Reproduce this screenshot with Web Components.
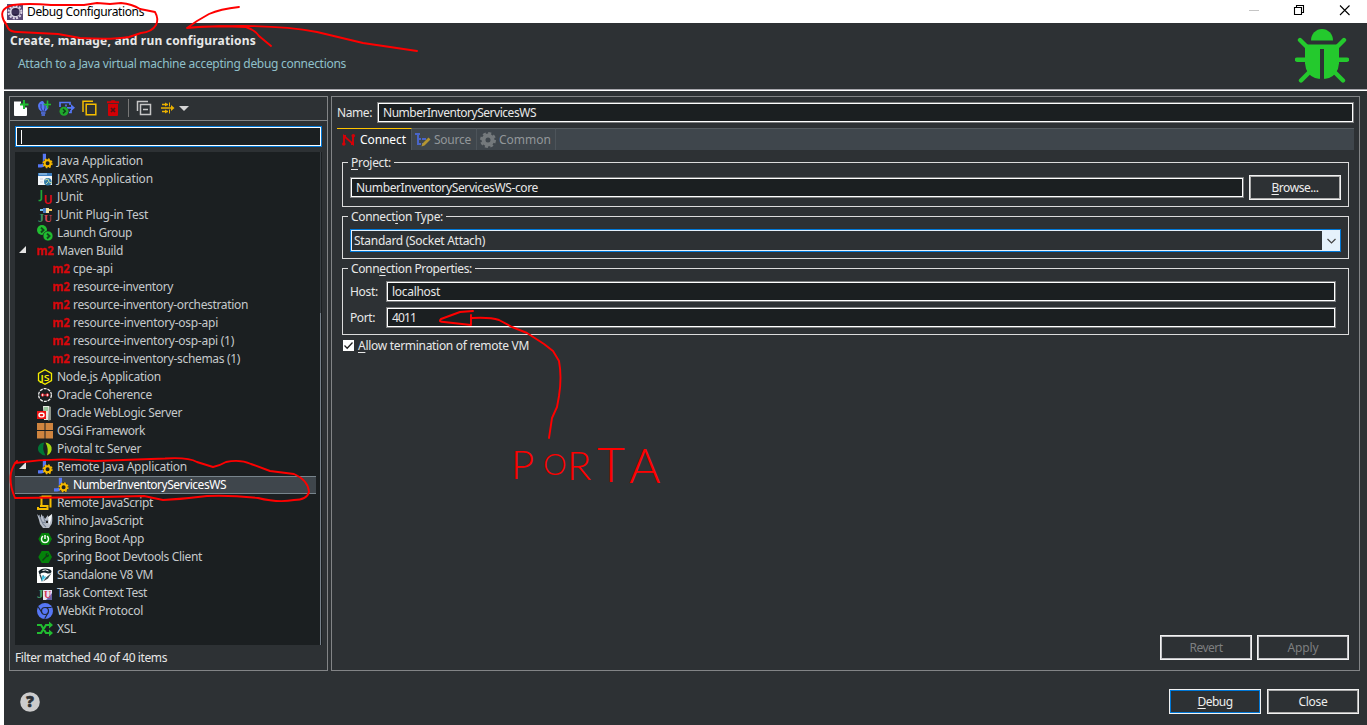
<!DOCTYPE html>
<html lang="en"><head><meta charset="utf-8"><title>Debug Configurations</title>
<style>
html,body{margin:0;height:100%;overflow:hidden}
body{font:12px/18px "Noto Sans","Open Sans",sans-serif;color:#e8e8e8;background:#fff}
</style></head><body>
<debug-dialog></debug-dialog>
<script>
const define=(name,html,setup)=>{
  const t=document.createElement('template');t.innerHTML=html;
  customElements.define(name,class extends HTMLElement{
    static get observedAttributes(){return ['name'];}
    constructor(){super();this.attachShadow({mode:'open'}).append(t.content.cloneNode(true));}
    connectedCallback(){if(setup)setup.call(this,this.shadowRoot);}
    attributeChangedCallback(){if(this.isConnected&&setup)setup.call(this,this.shadowRoot);}
  });
};
const gear=(x,y,r,c,w=2)=>`<circle cx="${x}" cy="${y}" r="${r}" fill="none" stroke="${c}" stroke-width="${w}"/><circle cx="${x}" cy="${y}" r="${r+1.3}" fill="none" stroke="${c}" stroke-width="1.5" stroke-dasharray="${((r+1.3)*Math.PI/8).toFixed(2)}"/>`;
const jApp=`<path d="M7.400 .8v8.4q0 3.6-3.200 3.600H1" fill="none" stroke="#5677f5" stroke-width="3.200"/><circle cx="10.600" cy="10.300" r="4.800" fill="#1b1f21"/>${gear(10.6,10.3,3,'#f5b800',2)}`;
const icons={
 java:jApp,
 jaxrs:`<path d="M1 2h14v12H1z" fill="#f4f7fa"/><path d="M1 2h14v3H1z" fill="#3e7fc0"/><path d="M2 3h8" stroke="#b9dcf5"/><path d="M3 8h3M3 11h3" stroke="#ccd"/><circle cx="10.8" cy="10.7" r="3.8" fill="#347aa8"/><path d="M8 9l3-1 1 3 3 1M9 13l2-2" stroke="#bdd9a2" fill="none"/>`,
 junit:`<text x="2.500" y="10" font-size="12" font-weight="600" fill="#20ae38">J</text><text x="6.500" y="14.8" font-size="12" font-weight="600" fill="#e10b18">U</text>`,
 plug:`<path d="M3 3h4" stroke="#79c8f5" stroke-width="2"/><path d="M6 1h4l2 2-2 3H6z" fill="#477ac2"/><path d="M9 1h3v5H9z" fill="#f4e6aa"/><path d="M12 3h3" stroke="#f4c658" stroke-width="2"/><text x="1" y="15" font-family="Liberation Serif" font-weight="700" font-size="12" fill="#3f9262">J</text><text x="7" y="15" font-family="Liberation Serif" font-weight="700" font-size="11" fill="#d9445b">U</text>`,
 group:`<circle cx="5" cy="5" r="5" fill="#21bd31"/><circle cx="11" cy="11" r="5" fill="#21bd31" stroke="#1b1f21" stroke-width=".7"/><path d="M4 2.6L6.5 5 4 7.5M10 8.6l2.5 2.4-2.5 2.5" fill="none" stroke="#10491a" stroke-width="2"/>`,
 maven:`<text x="-.8" y="12" font-size="13" font-weight="700" textLength="17.500" lengthAdjust="spacingAndGlyphs" fill="#d8070b" stroke="#d8070b" stroke-width=".3">m2</text>`,
 node:`<path d="M8 .8l6.5 3.7v7L8 15.2l-6.5-3.7v-7z" fill="none" stroke="#f4ee00" stroke-width="1.3"/><text x="3.4" y="11.7" font-size="9" font-weight="600" textLength="9" lengthAdjust="spacingAndGlyphs" fill="#f4ee00">JS</text>`,
 coherence:`<circle cx="8" cy="8" r="6.4" fill="none" stroke="#eee" stroke-width="1.3" stroke-dasharray="3 1"/><path d="M4 8h8" stroke="#e72d36"/><circle cx="5.600" cy="8" r="1.300" fill="#fff" stroke="#e72d36"/><circle cx="10.400" cy="8" r="1.300" fill="#fff" stroke="#e72d36"/>`,
 weblogic:`<path d="M6 1h6v14H7z" fill="#e6e8e2"/><path d="M12 1l2 1v13l-3 .7" fill="#8d9389"/><path d="M7 3h4M7 5h4" stroke="#4ba254"/><path d="M0 6h9v8H0z" fill="#ee1313"/><rect x="2" y="8.3" width="5" height="3.6" rx="1.8" fill="none" stroke="#fff" stroke-width="1.4"/>`,
 osgi:`<path d="M0 0h7.500v7H0zM8.500 0H16v7H8.500zM0 8h7.500v7.500H0zM8.500 8H16v7.500H8.500z" fill="#cf843f"/>`,
 pivotal:`<path d="M7.2 1.4C1 2-.5 8 2.500 11.500q2 2.600 6 3Q4.5 7 7.2 1.4z" fill="#007534"/><path d="M8.5 1.5Q13 2 14.5 6q1 6-4.5 8.5Q12 8 8.5 1.5z" fill="#a8d812"/>`,
 rjs:`<path d="M4.5 1.5h9v11M4.5 1.5v9M1 12v2h9.5v-3H3M2.5 2.5H5" fill="none" stroke="#f4bd00" stroke-width="2"/>`,
 rhino:`<path d="M0 1l4 4V1l4 5 3-4v4l4-5q1 9-1 11l-2 3H6l-3-4-1-4z" fill="#b7bec9"/><path d="M2 2l4 9 3 3M6 3l2 5 4-1M5 9l4 1" fill="none" stroke="#7c8798" stroke-width="1.100"/><path d="M9 8h2v2H9z" fill="#222"/><path d="M11 4l4-3-1 6-2 5z" fill="#f2f5f7"/>`,
 boot:`<path d="M4.7 2h7L15 8l-3.4 6H4.7L1.3 8z" fill="#04820a"/><path d="M6 5.2a3.5 3.5 0 1 0 4 0M8 4v4" fill="none" stroke="#f5fff5" stroke-width="1.5"/>`,
 dev:`<path d="M4.7 2h7L15 8l-3.4 6H4.7L1.3 8z" fill="#04820a"/><path d="M5 11l3.8-4q-1-3 2.3-3L9.8 5.3l1 1L12 5q.4 3.2-2.5 3.2L6 12z" fill="#103d17"/>`,
 v8:`<path d="M0 0h16v16H0z" fill="#fff"/><path d="M1.500 4.500Q4 1 9 1.500q6 .5 5.500 3.500-1 2-4 1.500Q6 4 2.500 7.500z" fill="#142129"/><path d="M5.500 3.500q3-1.500 6 .5" stroke="#fff" fill="none"/><path d="M14.500 6l-3.500 5.500-5 3 3-4z" fill="#36454b"/><path d="M3 7.500l2 5.500 1.500-4.500" stroke="#36454b" stroke-width="1.300" fill="none"/><path d="M6 8.500l-.5 4 3-3" stroke="#3dc5e9" stroke-width="1.500" fill="none"/>`,
 task:`<path d="M6 5h9v10H6z" fill="#e4e4f3"/><path d="M15 8v7H9" fill="#6764a8"/><text x="0" y="12.5" font-family="Liberation Serif" font-weight="700" font-size="13" fill="#48a16c">J</text><text x="7" y="12.5" font-family="Liberation Serif" font-weight="700" font-size="10" fill="#d53b52">U</text>`,
 webkit:`<circle cx="8" cy="8" r="8" fill="#5677f5"/><circle cx="8" cy="8" r="3.5" fill="#5677f5" stroke="#202838" stroke-width="1.2"/><path d="M8 4.5h6.6M11 9.8l-3.3 6M5 9.8L1.3 4" stroke="#202838" stroke-width="1.2"/>`,
 xsl:`<path d="M0 4h4l5 8h4M0 12h4l5-8h4" fill="none" stroke="#22bd31" stroke-width="2.200"/><path d="M12 .5L16 4l-4 3.5zM12 8.5l4 3.5-4 3.5z" fill="#22bd31"/>`,
 neu:`<path d="M1 1.500h7v6h6V15q0 1-1 1H2q-1 0-1-1z" fill="#fff"/><path d="M8 4.500h3v4H8z" fill="#fff"/><path d="M11 0v9M7 4.500h8.500" stroke="#20bb30" stroke-width="2"/>`,
 proto:`<path d="M7 1a5 5 0 0 0-5 5q0 3 3 5.500h4.500Q13 8.500 12 6L9.500 5z" fill="#5677f5"/><path d="M5 13h4.500M5.500 15h3.500" stroke="#5677f5" stroke-width="1.500"/><path d="M5 4v4l1.500 3M9 5v3l-1 3" fill="none" stroke="#2f3f82"/><path d="M11.500 .5v8M7.500 4.500H15" stroke="#20bb30" stroke-width="1.600"/>`,
 exp:`<path d="M1 7V2.5h10V5M10 12.500h2v-2.500M8 7.800h6M7 4.500v2" fill="none" stroke="#5677f5" stroke-width="1.700"/><path d="M12 4.3l4 3.5-4 3.5z" fill="#5677f5"/><circle cx="5" cy="11.2" r="4.5" fill="#20a82d"/><path d="M4 9l2.3 2.2L4 13.4" fill="none" stroke="#103c19" stroke-width="1.5"/>`,
 dup:`<path d="M1 12V1.2h10M4.2 4.2h9.6v10.6H4.2z" fill="none" stroke="#f4bd00" stroke-width="1.5"/>`,
 del:`<path d="M2 1.200h3.500l1-1h3l1 1H14v2H2zM3 4h10v11q0 1-1 1H4q-1 0-1-1z" fill="#d20005"/><path d="M6 8l4 4m0-4l-4 4" stroke="#4b1518" stroke-width="1.700"/>`,
 collapse:`<path d="M1.5 11V1.5H12M4.5 4.5h10v10h-10zM7 9.5h5" fill="none" stroke="#c6c6c6" stroke-width="1.5"/>`,
 filter:`<path d="M2 4.500h6M1 8h12M2 11.500h6" fill="none" stroke="#eab100" stroke-width="1.300"/><path d="M5 2.500l3 2-3 2zM5 9.500l3 2-3 2zM11 5l3.500 3-3.500 3z" fill="#eab100"/><path d="M9.500 2.500v4M9.500 9.500v4" stroke="#eab100"/>`,
 connect:`<path d="M3 12V4l9 8V4M2 4h3M10 12h3" fill="none" stroke="#d50007" stroke-width="1.900"/><circle cx="2.800" cy="12" r="1.800" fill="#d50007"/><circle cx="12.300" cy="3.800" r="1.800" fill="#d50007"/>`,
 source:`<path d="M0 2h5M3 2v10h3M3 7h3M7 7h4M7 12h3" fill="none" stroke="#4965c9" stroke-width="2"/><path d="M6.5 14.5l1-3 6-6 2 2-6 6z" fill="#b49531"/>`,
 gear:`<circle cx="8" cy="8" r="4.5" fill="none" stroke="#74797c" stroke-width="4"/><circle cx="8" cy="8" r="6.8" fill="none" stroke="#74797c" stroke-width="2.4" stroke-dasharray="3 2.34"/>`,
 eclipse:`<path d="M0 0h16v16H0z" fill="#5a4a76"/><circle cx="8" cy="8" r="6.4" fill="none" stroke="#ddd6e8" stroke-width="2" stroke-dasharray="2 1.35"/><circle cx="8" cy="8" r="5.4" fill="#d9d5e3"/><circle cx="8.5" cy="8" r="4" fill="#2b2145"/><path d="M5 7h7M5 9h7" stroke="#5d4f78" stroke-width=".7"/>`
};
define('x-icon','<style>:host{display:block;width:16px;height:16px;flex:none}svg{display:block;overflow:visible}</style><svg width="16" height="16" viewBox="0 0 16 16"></svg>',function(r){r.querySelector('svg').innerHTML=icons[this.getAttribute('name')]||'';});

define('window-bar',`<style>:host{display:flex;height:23px;align-items:center;background:#fff;color:#000;padding-left:7px;box-sizing:border-box}
fit-text{margin:1px 0 0 4px}.c{margin-left:auto}svg{display:block}</style>
<x-icon name="eclipse"></x-icon><fit-text w="117">Debug Configurations</fit-text>
<svg class="c" width="130" height="23" fill="none"><path d="M12 10.5h10" stroke="#c5c5c5"/><path d="M57.5 7.5h7v7h-7zM59.5 7V5.500h7v7H65" stroke="#000" stroke-width="1.1"/><path d="M103 5.500l9.500 9.500m0-9.500l-9.500 9.500" stroke="#000" stroke-width="1.1"/></svg>`);
define('dialog-header',`<style>:host{display:flex;justify-content:space-between;height:66px;border-bottom:1px solid #a5a5ab;box-shadow:0 1px #fff;margin-bottom:1px;padding:0 18px 0 6px}
.t{padding-top:9px}.t fit-text{display:block}b{font-weight:700}.s{margin:5px 0 0 8px;color:#8fc0ca}svg{margin-top:5px}</style>
<div class="t"><fit-text w="246"><b>Create, manage, and run configurations</b></fit-text><fit-text class="s" w="328">Attach to a Java virtual machine accepting debug connections</fit-text></div>
<svg width="54" height="57" viewBox="1295 28 54 57"><g fill="#24c92d"><path d="M1311 40.500a11 11.500 0 0 1 22 0z"/><path d="M1305 44.500h34v19q-1 11-10 14.500-7 2-14 0-9-3.500-10-14.500z"/></g><path d="M1322 49v30" stroke="#2d3134" stroke-width="4"/><path d="M1300 40l7 7M1344 40l-7 7M1297 59.700h9M1347 59.700h-9M1301 80.500l8-8M1343 80.500l-8-8" stroke="#24c92d" stroke-width="4.400" stroke-linecap="round"/></svg>`);
define('tool-bar',`<style>:host{display:flex;height:22px;padding-bottom:1px;align-items:center;border-bottom:1px solid #828486;padding-left:3px;gap:7px}i{width:1px;height:18px;background:#777;margin:0}.f{margin-left:1px}.a{border:5px solid transparent;border-top-color:#d5d5d5;border-bottom:0;margin-left:-4px}</style>
<x-icon name="neu"></x-icon><x-icon name="proto"></x-icon><x-icon name="exp"></x-icon><x-icon name="dup"></x-icon><x-icon name="del"></x-icon><i></i><x-icon name="collapse"></x-icon><x-icon class="f" name="filter"></x-icon><div class="a"></div>`);
define('tree-row',`<style>:host{display:flex;align-items:center;height:18px;color:#c5c9cb;box-sizing:border-box;padding-left:22px}:host([sub]){padding-left:38px}
:host([sel]){background:#3f464c;color:#fff;box-shadow:inset 0 1px #78848c,inset 0 -1px #78848c;margin-right:4px}
fit-text{margin-left:4px}.tw{display:none}:host([open]){padding-left:4px}:host([open]) .tw{display:block;width:7px;height:7px;background:#e4e4e4;clip-path:polygon(100% 0,100% 100%,0 100%);margin:-3px 11px 0 0}</style>
<div class="tw"></div><x-icon></x-icon><fit-text><slot></slot></fit-text>`,function(r){r.querySelector('x-icon').setAttribute('name',this.getAttribute('icon'));const f=r.querySelector('fit-text');f.setAttribute('w',this.getAttribute('w'));f.len=this.textContent.length;});

const rows=[['java',86,'Java Application'],['jaxrs',96,'JAXRS Application'],['junit',26,'JUnit'],['plug',91,'JUnit Plug-in Test'],['group',75,'Launch Group'],['maven',66,'Maven Build','open'],['maven',40,'cpe-api','sub'],['maven',100,'resource-inventory','sub'],['maven',175,'resource-inventory-orchestration','sub'],['maven',145,'resource-inventory-osp-api','sub'],['maven',161,'resource-inventory-osp-api (1)','sub'],['maven',167,'resource-inventory-schemas (1)','sub'],['node',104,'Node.js Application'],['coherence',95,'Oracle Coherence'],['weblogic',125,'Oracle WebLogic Server'],['osgi',88,'OSGi Framework'],['pivotal',84,'Pivotal tc Server'],['java',130,'Remote Java Application','open'],['java',153,'NumberInventoryServicesWS','sub sel'],['rjs',96,'Remote JavaScript'],['rhino',86,'Rhino JavaScript'],['boot',87,'Spring Boot App'],['dev',145,'Spring Boot Devtools Client'],['v8',96,'Standalone V8 VM'],['task',90,'Task Context Test'],['webkit',86,'WebKit Protocol'],['xsl',19,'XSL']];
define('config-tree',`<style>:host{display:flex;height:493px;background:#1b1f21}.r{flex:1}.bar{width:1px;margin-right:1px;background:linear-gradient(#3a4045 161px,#77818b 161px)}</style><div class="r">${rows.map(([i,w,t,a=''])=>`<tree-row icon="${i}" w="${w}" ${a}>${t}</tree-row>`).join('')}</div><div class="bar"></div>`);
define('text-field',`<style>:host{display:flex;align-items:center;box-sizing:border-box;height:21px;flex:1;background:#1b1f21;border:1px solid #7b7d7e;box-shadow:inset 0 0 0 1px #fff;padding-left:5px}
:host([focused]){border-color:#0078d7;flex:none}:host([focused]) .c{display:block}.c{display:none;width:1px;height:14px;background:#fff}</style><div class="c"></div><slot></slot>`);
define('push-button',`<style>:host{display:flex;align-items:center;justify-content:center;width:92px;height:25px;box-sizing:border-box;border:1px solid #f2f2f2;box-shadow:inset 0 0 0 1px #adadad;color:#eee;flex:none}:host([disabled]){color:#7d7f80;box-shadow:inset 0 0 0 1px #c2c2c6}:host([primary]){box-shadow:inset 0 0 0 1px #0078d7}</style><slot></slot>`);
define('group-box',`<style>:host{display:block;position:relative;box-sizing:border-box;border:1px solid #dcdcdc}.l{position:absolute;left:5px;top:-9px;background:#2d3134;padding:0 3px;height:18px}</style><div class="l"><slot name="label"></slot></div><slot></slot>`);
define('combo-box',`<style>:host{display:flex;align-items:center;justify-content:space-between;height:23px;box-sizing:border-box;border:1px solid #0078d7;box-shadow:inset 0 0 0 1px #e5f1fb;padding-left:3px}.d{display:grid;place-items:center;width:18px;height:21px;background:#e5f1fb}</style><slot></slot><div class="d"><svg width="10" height="6" fill="none"><path d="M1.500 1l4 4 4-4" stroke="#444" stroke-width="1.200"/></svg></div>`);
define('tab-item',`<style>:host{display:flex;box-sizing:border-box;align-items:center;height:22px;color:#92979a;padding:1px 0 0 3px;border-right:1px solid #4d545a;border-top:1px solid #555c61}:host([active]){color:#fff;background:#2d3134;border-top:1px solid #ffc400;padding-left:4px}fit-text,::slotted(*){margin-left:3px}</style><x-icon></x-icon><slot></slot>`,function(r){r.querySelector('x-icon').setAttribute('name',this.getAttribute('icon'));});
define('launch-list',`<style>:host{display:flex;flex-direction:column;width:319px;height:575px;box-sizing:border-box;border:1px solid #828486}.b{padding:5px 5px 0;height:520px}config-tree{margin-top:5px}.b>fit-text{margin-top:4px}</style>
<tool-bar></tool-bar><div class="b"><text-field focused></text-field><config-tree></config-tree><fit-text w="152">Filter matched 40 of 40 items</fit-text></div>`);
define('config-form',`<style>:host{display:flex;flex-direction:column;width:1029px;height:575px;box-sizing:border-box;border:1px solid #828486;padding:5px}
.n{display:flex;align-items:center;height:21px}.n>fit-text{width:40px}
.tabs{display:flex;height:22px;margin-top:5px;background:#3f464c;box-shadow:inset 0 1px #555c61}
.page{padding:12px 5px 0;display:flex;flex-direction:column;flex:1}
.p{height:45px;padding:12px 7px 0}.r{display:flex;gap:5px}.r text-field{margin-top:2px}
.ct{height:43px;margin-top:9px;padding:12px 7px 0}.cp{height:67px;margin-top:9px;padding:12px 12px 0 7px}
.h{display:flex;align-items:center}.h+.h{margin-top:5px}.h .lb{width:36px}
.ck{display:flex;align-items:center;gap:4px;margin:2px 0 0 1px}.ck svg{margin-top:-1px}.act{display:flex;gap:5px;justify-content:flex-end;margin-top:auto;margin-bottom:5px}u{text-underline-offset:2px;text-decoration-thickness:1px}svg{display:block}</style>
<div class="n"><div style="width:40px"><fit-text w="35">Name:</fit-text></div><text-field><fit-text w="153">NumberInventoryServicesWS</fit-text></text-field></div>
<div class="tabs"><tab-item active icon="connect" style="width:75px"><fit-text w="46">Connect</fit-text></tab-item><tab-item icon="source" style="width:65px"><fit-text w="37">Source</fit-text></tab-item><tab-item icon="gear" style="width:79px"><fit-text w="52">Common</fit-text></tab-item></div>
<div class="page">
<group-box class="p"><fit-text slot="label" w="40"><u>P</u>roject:</fit-text><div class="r"><text-field><fit-text w="182">NumberInventoryServicesWS-core</fit-text></text-field><push-button><fit-text w="47"><u>B</u>rowse...</fit-text></push-button></div></group-box>
<group-box class="ct"><fit-text slot="label" w="92">Connect<u>i</u>on Type:</fit-text><combo-box><fit-text w="131">Standard (Socket Attach)</fit-text></combo-box></group-box>
<group-box class="cp"><fit-text slot="label" w="121">Conn<u>e</u>ction Properties:</fit-text><div class="h"><div class="lb"><fit-text w="28">Host:</fit-text></div><text-field><fit-text w="48">localhost</fit-text></text-field></div><div class="h"><div class="lb"><fit-text w="25">Port:</fit-text></div><text-field><fit-text w="24">4011</fit-text></text-field></div></group-box>
<div class="ck"><svg width="11" height="11"><path d="M0 0h11v11H0z" fill="#fff"/><path d="M1.500 5.500l2.700 2.700L9.500 2.500" fill="none" stroke="#222" stroke-width="1.300"/></svg><fit-text w="171"><u>A</u>llow termination of remote VM</fit-text></div>
<div class="act"><push-button disabled><fit-text w="33">Revert</fit-text></push-button><push-button disabled><fit-text w="31">Apply</fit-text></push-button></div></div>`);
define('dialog-footer',`<style>:host{display:flex;align-items:center;gap:6px;height:54px;padding:7px 8px 0 16px;box-sizing:border-box}svg{margin:1px auto 0 0}u{text-underline-offset:2px}</style>
<svg width="20" height="20"><circle cx="10" cy="10" r="9.800" fill="#ccc"/><text x="10" y="15.300" text-anchor="middle" font-size="15" font-weight="900" fill="#2d3134" stroke="#2d3134" stroke-width=".6">?</text></svg>
<push-button primary><fit-text w="35"><u>D</u>ebug</fit-text></push-button><push-button><fit-text w="29">Close</fit-text></push-button>`);
define('pen-notes',`<style>:host{position:absolute;inset:0;pointer-events:none}svg{display:block}</style>
<svg width="1367" height="725" fill="none" stroke="#f00" stroke-width="1.900" stroke-linecap="round" stroke-linejoin="round">
<path d="M5 23C0 14 1 8 13 5Q28 3 51 5L84 5 97 3 110 4 121 3Q132 4 140 9L155 12Q159 19 156 25 152 32 141 33L129 37Q112 40 80 38L58 34 18 32Q10 32 8 28L5 22"/>
<path d="M239 7Q220 9 209 14L197 21 187 28Q210 26 242 26 285 26 317 32 338 37 363 43L417 51M187 28Q210 25 246 27 255 30 259 36L271 46"/>
<path d="M15 463Q55 457 95 461L165 458.500Q188 457 197 462L213 467Q219 466 226 462 240 459 251 464L270 471 294 474Q308 480 309 492 307 500 294 500 278 503 258 498 230 495 207 496 184 499 163 500L144 496 103 497 15 498Q9 484 11 473 13 465 17 461"/>
<path d="M473 311L460 312 441 319Q438 322 444 322L471 325V315M472 318Q490 317 499 320L512 327 527 333 544 344 553 351 559 361Q562 377 559 396L557 407 552 418 549 438"/>
<text x="511 543 567 597 629" y="479 475 480 482 483" font-size="40" fill="#f00" stroke="none" font-family="Lato" font-weight="300">P<tspan font-size="30">O</tspan><tspan font-size="40">R</tspan><tspan font-size="48">T</tspan><tspan font-size="48">A</tspan></text>
</svg>`);
define('debug-dialog',`<style>:host{display:block;height:725px;position:relative;overflow:hidden}.w{margin-left:4px;background:#2d3134;height:702px}.m{display:flex;gap:3px;padding:5px 7px 0 5px}</style>
<window-bar></window-bar><div class="w"><dialog-header></dialog-header><div class="m"><launch-list></launch-list><config-form></config-form></div><dialog-footer></dialog-footer></div><pen-notes></pen-notes>`);
/* Text whose tracking is adjusted so that it fills the width given in "w". */
define('fit-text','<style>:host{display:inline-block;white-space:pre;flex:none;line-height:18px}</style><slot></slot>',function(){
  const w=+this.getAttribute('w'),n=this.len||this.textContent.length;if(!w)return;
  this.style.width='auto';this.style.letterSpacing='0';
  const r=document.createRange();const p=this.getRootNode().host;
  r.selectNodeContents(this.len?p:this);
  const nat=r.getBoundingClientRect().width;
  this.style.letterSpacing=((w-nat)/n).toFixed(3)+'px';this.style.width=w+'px';
});
</script></body></html>
